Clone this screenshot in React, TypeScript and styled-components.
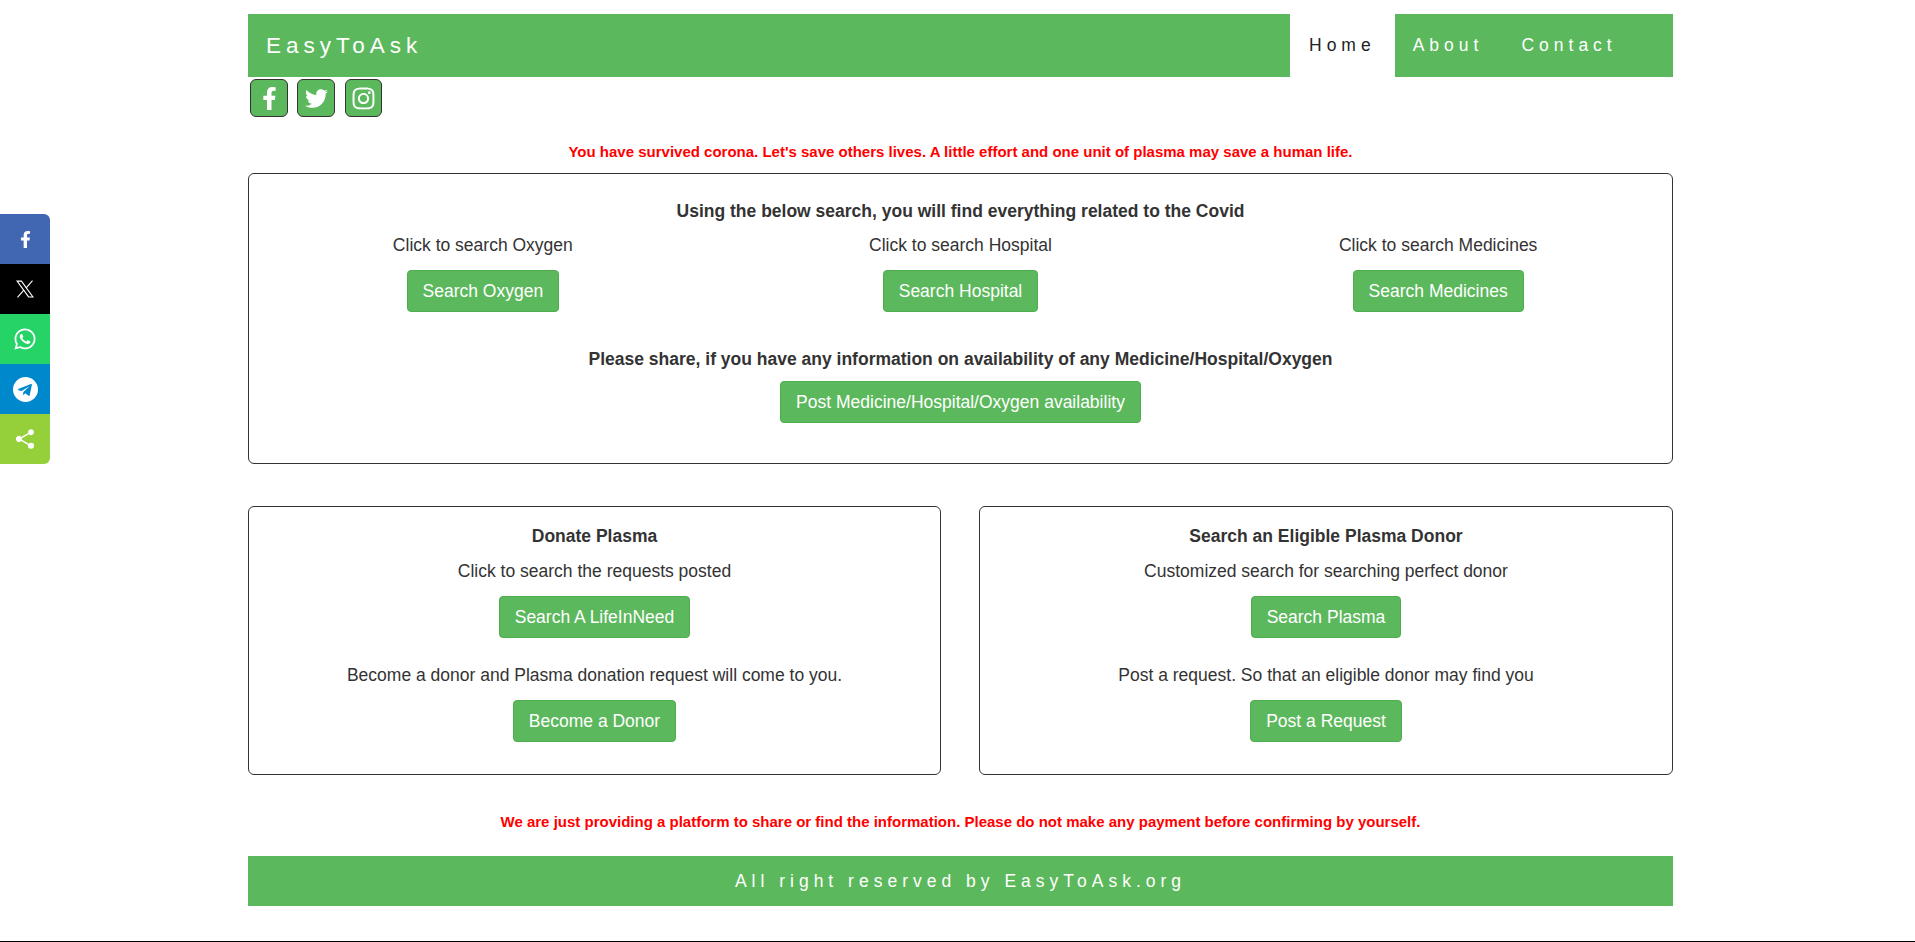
import { ReactNode } from "react";
import styled, { createGlobalStyle } from "styled-components";
import { FaFacebookF, FaTwitter, FaInstagram, FaWhatsapp } from "react-icons/fa";
import { IoShareSocial } from "react-icons/io5";

const GREEN = "#5cb85c";

const GlobalStyle = createGlobalStyle`
  * { box-sizing: border-box; }
  html, body { margin: 0; padding: 0; background: #fff; }
  body {
    font-family: "Liberation Sans", Arial, sans-serif;
    font-size: 17.5px;
    color: #333;
  }
`;

const Page = styled.div`
  height: 942px;
  border-bottom: 1px solid #000;
  padding: 14px 242px 0 248px;
  overflow: hidden;
`;

const Navbar = styled.nav`
  height: 63px;
  display: flex;
  background: ${GREEN};
`;

const Brand = styled.a`
  flex: 1;
  padding-left: 18px;
  line-height: 63px;
  font-size: 22.5px;
  letter-spacing: 5px;
  color: #fff;
`;

const NavLinks = styled.div`
  width: 383px;
  display: flex;
`;

const NavLink = styled.a<{ $active?: boolean }>`
  height: 63px;
  line-height: 63px;
  padding: 0 19px 0 19px;
  margin-right: ${({ $active }) => ($active ? "-1px" : "0")};
  font-size: 17.5px;
  letter-spacing: 5px;
  color: ${({ $active }) => ($active ? "#222" : "#fff")};
  background: ${({ $active }) => ($active ? "#fff" : "transparent")};
`;

const SocialRow = styled.div`
  display: flex;
  gap: 9px;
  padding: 2px 0 0 2px;
  height: 65px;
`;

const SocialButton = styled.a`
  width: 38px;
  height: 38px;
  display: flex;
  align-items: center;
  justify-content: center;
  background: ${GREEN};
  border: 1px solid #333;
  border-radius: 6px;
  color: #fff;
  font-size: 25px;
`;

const InstagramButton = styled(SocialButton)`
  width: 37px;
  margin-left: 1px;
`;

const Notice = styled.p`
  margin: 0;
  text-align: center;
  font-size: 15px;
  font-weight: 700;
  line-height: 20px;
  color: #f00;
`;

const Panel = styled.section`
  border: 1px solid #333;
  border-radius: 6px;
  text-align: center;
`;

const SearchPanel = styled(Panel)`
  height: 291px;
  margin-top: 11px;
  padding-top: 26px;
`;

const Heading = styled.h4`
  margin: 0;
  font-size: 17.5px;
  font-weight: 700;
  line-height: 22px;
  color: #333;
`;

const SearchColumns = styled.div`
  display: grid;
  grid-template-columns: repeat(3, 1fr);
  margin: 12px -5px 36px;
`;

const Column = styled.div`
  display: flex;
  flex-direction: column;
  align-items: center;
`;

const Label = styled.p`
  margin: 0 0 14px;
  font-size: 17.5px;
  line-height: 22px;
`;

const Button = styled.a`
  display: inline-block;
  padding: 0 15px;
  height: 42px;
  line-height: 40px;
  font-size: 17.5px;
  color: #fff;
  background: ${GREEN};
  border: 1px solid #4cae4c;
  border-radius: 4px;
`;

const ShareAction = styled(Column)`
  margin-top: 11px;
`;

const PlasmaGrid = styled.div`
  display: grid;
  grid-template-columns: 693px 1fr;
  gap: 38px;
  margin-top: 42px;
`;

const PlasmaPanel = styled(Panel)`
  height: 269px;
  padding-top: 18px;
  display: flex;
  flex-direction: column;
  align-items: center;
`;

const PlasmaHeading = styled(Heading)`
  margin-bottom: 13px;
`;

const PlasmaGap = styled.div`
  height: 26px;
`;

const Disclaimer = styled(Notice)`
  margin-top: 37px;
`;

const Footer = styled.footer`
  height: 50px;
  margin-top: 24px;
  background: ${GREEN};
  color: #fff;
  text-align: center;
  line-height: 50px;
  font-size: 17.5px;
  letter-spacing: 5px;
`;

const ShareBar = styled.div`
  position: fixed;
  left: 0;
  top: 214px;
  width: 50px;
  border-radius: 0 6px 6px 0;
  overflow: hidden;
`;

const ShareButton = styled.a<{ $bg: string }>`
  width: 50px;
  height: 50px;
  display: flex;
  align-items: center;
  justify-content: center;
  background: ${({ $bg }) => $bg};
  color: #fff;
`;

const XIcon = () => (
  <svg width="20" height="20" viewBox="0 0 24 24" fill="none" stroke="#fff" strokeWidth="1.3">
    <path d="M2.5 2.5h5.2l13.8 19h-5.2z" />
    <path d="M21 2l-7.8 8.9M3 22l7.8-8.9" />
  </svg>
);

const TelegramIcon = () => (
  <svg width="25" height="25" viewBox="0 0 24 24">
    <circle cx="12" cy="12" r="12" fill="#fff" />
    <path
      fill="#0088cc"
      d="M5 11.6l12.2-4.8c.6-.2 1.1.2.9.9l-2.1 9.8c-.1.7-.6.8-1.1.5l-3.1-2.3-1.5 1.4c-.2.2-.3.3-.6.3l.2-3.1 5.7-5.1c.2-.2 0-.3-.3-.1l-7 4.4-3-.9c-.7-.2-.7-.6.1-.8z"
    />
  </svg>
);

const SHARES: { bg: string; icon: ReactNode }[] = [
  { bg: "#4267b2", icon: <FaFacebookF size={17} /> },
  { bg: "#000000", icon: <XIcon /> },
  { bg: "#25d366", icon: <FaWhatsapp size={24} /> },
  { bg: "#0088cc", icon: <TelegramIcon /> },
  { bg: "#95d03a", icon: <IoShareSocial size={24} /> },
];

const SEARCHES = [
  { label: "Click to search Oxygen", action: "Search Oxygen" },
  { label: "Click to search Hospital", action: "Search Hospital" },
  { label: "Click to search Medicines", action: "Search Medicines" },
];

const PLASMA = [
  {
    title: "Donate Plasma",
    first: "Click to search the requests posted",
    firstAction: "Search A LifeInNeed",
    second: "Become a donor and Plasma donation request will come to you.",
    secondAction: "Become a Donor",
  },
  {
    title: "Search an Eligible Plasma Donor",
    first: "Customized search for searching perfect donor",
    firstAction: "Search Plasma",
    second: "Post a request. So that an eligible donor may find you",
    secondAction: "Post a Request",
  },
];

export default function App() {
  return (
    <Page>
      <GlobalStyle />
      <ShareBar>
        {SHARES.map((s) => (
          <ShareButton key={s.bg} $bg={s.bg}>
            {s.icon}
          </ShareButton>
        ))}
      </ShareBar>
      <Navbar>
        <Brand>EasyToAsk</Brand>
        <NavLinks>
          <NavLink $active>Home</NavLink>
          <NavLink>About</NavLink>
          <NavLink>Contact</NavLink>
        </NavLinks>
      </Navbar>
      <SocialRow>
        <SocialButton><FaFacebookF size={23} /></SocialButton>
        <SocialButton><FaTwitter size={23} /></SocialButton>
        <InstagramButton><FaInstagram /></InstagramButton>
      </SocialRow>
      <Notice>
        You have survived corona. Let's save others lives. A little effort and one unit of plasma may save a human life.
      </Notice>
      <SearchPanel>
        <Heading>Using the below search, you will find everything related to the Covid</Heading>
        <SearchColumns>
          {SEARCHES.map((s) => (
            <Column key={s.action}>
              <Label>{s.label}</Label>
              <Button>{s.action}</Button>
            </Column>
          ))}
        </SearchColumns>
        <Heading>Please share, if you have any information on availability of any Medicine/Hospital/Oxygen</Heading>
        <ShareAction>
          <Button>Post Medicine/Hospital/Oxygen availability</Button>
        </ShareAction>
      </SearchPanel>
      <PlasmaGrid>
        {PLASMA.map((p) => (
          <PlasmaPanel key={p.title}>
            <PlasmaHeading>{p.title}</PlasmaHeading>
            <Label>{p.first}</Label>
            <Button>{p.firstAction}</Button>
            <PlasmaGap />
            <Label>{p.second}</Label>
            <Button>{p.secondAction}</Button>
          </PlasmaPanel>
        ))}
      </PlasmaGrid>
      <Disclaimer>
        We are just providing a platform to share or find the information. Please do not make any payment before confirming by yourself.
      </Disclaimer>
      <Footer>All right reserved by EasyToAsk.org</Footer>
    </Page>
  );
}
